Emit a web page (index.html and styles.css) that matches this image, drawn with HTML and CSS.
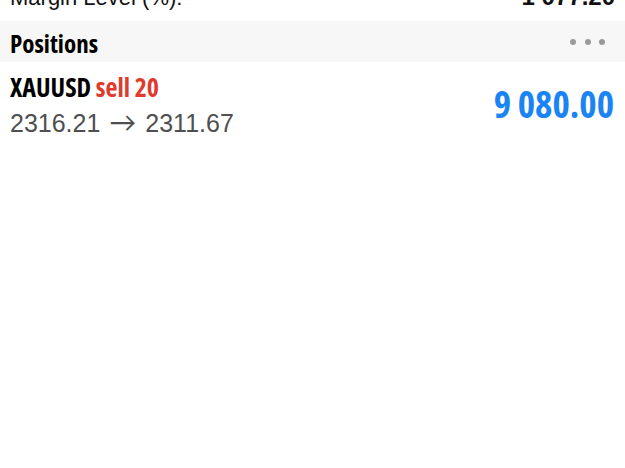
FILE: index.html
```html
<!DOCTYPE html>
<html>
<head>
<meta charset="utf-8">
<link rel="stylesheet" href="styles.css">
</head>
<body>
<div class="summary-row">
  <span class="summary-label">Margin Level (%):</span>
  <span class="summary-value">1 077.20</span>
</div>
<div class="section-header">
  <span class="section-title">Positions</span>
  <span class="more"><i class="dot"></i><i class="dot"></i><i class="dot"></i></span>
</div>
<div class="position">
  <div class="position-info">
    <div class="position-title"><span class="symbol">XAUUSD</span> <span class="side">sell 20</span></div>
    <div class="position-prices">2316.21 <span class="arrow">→</span> 2311.67</div>
  </div>
  <div class="position-profit">9 080.00</div>
</div>
</body>
</html>
```
FILE: styles.css
```css
html, body {
  margin: 0;
  padding: 0;
  background: #ffffff;
}
body {
  font-family: "Liberation Sans", Arial, sans-serif;
  width: 625px;
  height: 468px;
  overflow: hidden;
}
.summary-row {
  height: 21px;
  display: flex;
  justify-content: space-between;
  align-items: flex-end;
  padding: 0 10px 0 10px;
}
.summary-label {
  font-size: 22px;
  line-height: 22px;
  color: #111;
  margin-bottom: 12px;
}
.summary-value {
  font-size: 24px;
  font-weight: 700;
  line-height: 24px;
  color: #111;
  margin-bottom: 12px;
}
.section-header {
  height: 41px;
  box-sizing: border-box;
  background: #f7f7f7;
  display: flex;
  align-items: center;
  justify-content: space-between;
  padding: 2px 20px 0 10px;
}
.section-title {
  font-family: "Open Sans", sans-serif;
  font-stretch: 75%;
  font-weight: 700;
  font-size: 25px;
  color: #000;
}
.more {
  display: flex;
  gap: 8.5px;
  margin-top: -2px;
}
.dot {
  display: block;
  width: 6px;
  height: 6px;
  border-radius: 50%;
  background: #9a9a9a;
}
.position {
  display: flex;
  justify-content: space-between;
  align-items: center;
  padding: 10px 11px 0 10px;
}
.position-title {
  font-family: "Open Sans", sans-serif;
  font-stretch: 75%;
  font-weight: 700;
  font-size: 26px;
  line-height: 30px;
}
.symbol { color: #000; }
.side { color: #e03a2d; }
.position-prices {
  margin-top: 3px;
  font-size: 25px;
  line-height: 34px;
  color: #4f4f4f;
}
.arrow {
  font-family: Lato, sans-serif;
  font-size: 27px;
  margin: 0 2px;
}
.position-profit {
  font-family: "Open Sans", sans-serif;
  font-stretch: 75%;
  font-weight: 700;
  font-size: 37px;
  line-height: 37px;
  color: #1a84f2;
  margin-top: -6px;
}
```
